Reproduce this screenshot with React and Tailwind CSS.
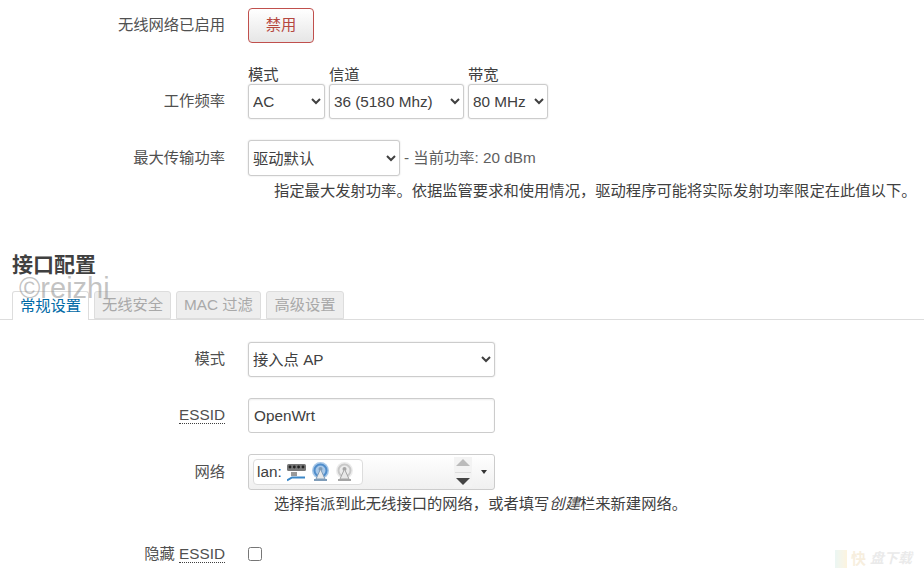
const selectClass =
  'h-full rounded-[3px] border border-[#ccc] bg-white text-[15.3px] text-[#404040] shadow-[0_0_2px_#ddd] outline-none'

const Row = ({ label, dotted, className = '', children }) => (
  <div className={`flex items-center ${className}`}>
    <div className="w-[225px] shrink-0 text-right text-[#505050]">
      {label}
      {dotted && <span className="border-b border-dotted border-[#404040] leading-none">{dotted}</span>}
    </div>
    <div className="ml-[23px] flex items-center">{children}</div>
  </div>
)

const SwitchIcon = () => (
  <svg width="19" height="20" viewBox="0 0 19 20">
    <rect x="0" y="2" width="19" height="7" rx="1.5" fill="#777" />
    <circle cx="3" cy="5" r="1.4" fill="#222" />
    <circle cx="7.3" cy="5" r="1.4" fill="#222" />
    <circle cx="11.6" cy="5" r="1.4" fill="#222" />
    <circle cx="16" cy="5" r="1.4" fill="#222" />
    <rect x="4" y="10" width="6" height="4" fill="#9a9a9a" />
    <path d="M0 18.5 L5 15.5 H18" fill="none" stroke="#3c88c8" strokeWidth="2" />
  </svg>
)

const RadioIcon = ({ ring, inner, base }) => (
  <svg width="19" height="20" viewBox="0 0 19 20">
    <circle cx="9.5" cy="8.5" r="8.5" fill={ring} />
    <circle cx="9.5" cy="8.5" r="6" fill="none" stroke={inner} strokeWidth="2" />
    <circle cx="9.5" cy="7" r="2" fill={base} />
    <path d="M9.5 7 L5 17 H14 Z" fill="#e8e8e8" stroke={base} strokeWidth="1" />
    <rect x="3" y="17" width="13" height="2" fill={base} />
  </svg>
)

const App = () => (
  <div className="relative h-[578px] w-[924px] overflow-hidden bg-white font-['Liberation_Sans','Noto_Sans_CJK_SC',sans-serif] text-[15.3px] text-[#404040]">
    <Row label="无线网络已启用" className="pt-[8px]">
      <button className="h-[35px] w-[66px] rounded-[4px] border border-[#c0504d] bg-gradient-to-b from-white to-[#e6e6e6] text-[#b5473f]">
        禁用
      </button>
    </Row>

    <div className="mt-[22px] flex items-end">
      <div className="flex h-[35px] w-[225px] shrink-0 items-center justify-end text-[#505050]">工作频率</div>
      <div className="ml-[23px] flex gap-[4px]">
        <div className="flex flex-col">
          <span className="h-[19px] leading-[19px]">模式</span>
          <div className="h-[35px]">
            <select className={`${selectClass} w-[77px]`}><option>AC</option></select>
          </div>
        </div>
        <div className="flex flex-col">
          <span className="h-[19px] leading-[19px]">信道</span>
          <div className="h-[35px]">
            <select className={`${selectClass} w-[135px]`}><option>36 (5180 Mhz)</option></select>
          </div>
        </div>
        <div className="flex flex-col">
          <span className="h-[19px] leading-[19px]">带宽</span>
          <div className="h-[35px]">
            <select className={`${selectClass} w-[80px]`}><option>80 MHz</option></select>
          </div>
        </div>
      </div>
    </div>

    <Row label="最大传输功率" className="mt-[21px]">
      <div className="h-[36px]">
        <select className={`${selectClass} w-[152px]`}><option>驱动默认</option></select>
      </div>
      <span className="ml-[4px] text-[#606060]">- 当前功率: 20 dBm</span>
    </Row>
    <p className="ml-[274px] mt-[5px] whitespace-nowrap leading-[19px]">
      指定最大发射功率。依据监管要求和使用情况，驱动程序可能将实际发射功率限定在此值以下。
    </p>

    <h3 className="ml-[12px] mt-[51px] text-[21px] font-bold leading-[28px]">接口配置</h3>

    <div className="mt-[12px] flex h-[29px] items-end gap-[5px] border-b border-[#ddd] pl-[12px]">
      <div className="relative z-10 -mb-px flex h-[29px] w-[77px] items-center justify-center rounded-t-[3px] border border-b-0 border-[#ddd] bg-white text-[#0069a6]">
        常规设置
      </div>
      <div className="flex h-[28px] w-[77px] items-center justify-center rounded-t-[3px] border border-[#ddd] bg-[#eee] text-[#a9a9a9]">
        无线安全
      </div>
      <div className="flex h-[28px] w-[85px] items-center justify-center rounded-t-[3px] border border-[#ddd] bg-[#eee] text-[#a9a9a9]">
        MAC 过滤
      </div>
      <div className="flex h-[28px] w-[78px] items-center justify-center rounded-t-[3px] border border-[#ddd] bg-[#eee] text-[#a9a9a9]">
        高级设置
      </div>
    </div>
    <span className="pointer-events-none absolute left-[19px] top-[270px] z-20 text-[29px] leading-[36px] text-[#888]/50">
      ©reizhi
    </span>

    <Row label="模式" className="mt-[22px]">
      <div className="h-[35px]">
        <select className={`${selectClass} w-[247px]`}><option>接入点 AP</option></select>
      </div>
    </Row>

    <Row dotted="ESSID" className="mt-[21px]">
      <input
        readOnly
        value="OpenWrt"
        className="h-[35px] w-[247px] rounded-[3px] border border-[#ccc] bg-white px-[5px] text-[#404040] shadow-[inset_0_1px_2px_#eee] outline-none"
      />
    </Row>

    <Row label="网络" className="mt-[21px]">
      <div className="relative flex h-[36px] w-[247px] items-center rounded-[3px] border border-[#ccc] bg-gradient-to-b from-white to-[#f0f0f0] pl-[4px]">
        <div className="flex h-[26px] w-[110px] items-center gap-[5px] rounded-[4px] border border-[#ddd] bg-white pl-[3px]">
          lan:
          <SwitchIcon />
          <RadioIcon ring="#a8c8e8" inner="#4f8dcb" base="#7f9cb8" />
          <RadioIcon ring="#ececec" inner="#c8c8c8" base="#a5a5a5" />
        </div>
        <div className="absolute right-[22px] top-[2px] flex h-[30px] w-[18px] flex-col items-center justify-between bg-[#f3f3f3] py-[2px]">
          <span className="h-0 w-0 border-x-[7px] border-b-[7px] border-x-transparent border-b-[#bbb]" />
          <span className="h-px w-[16px] bg-[#ddd]" />
          <span className="h-0 w-0 border-x-[7px] border-t-[7px] border-x-transparent border-t-[#444]" />
        </div>
        <span className="absolute right-[7px] top-[15px] h-0 w-0 border-x-[3px] border-t-[4px] border-x-transparent border-t-[#333]" />
      </div>
    </Row>
    <p className="ml-[274px] mt-[4px] leading-[19px]">
      选择指派到此无线接口的网络，或者填写<em>创建</em>栏来新建网络。
    </p>

    <Row label="隐藏 " dotted="ESSID" className="mt-[30px]">
      <input type="checkbox" readOnly className="h-[14px] w-[14px]" />
    </Row>

    <div className="pointer-events-none absolute bottom-[8px] left-[835px] flex items-center gap-[4px] opacity-20">
      <span className="h-[18px] w-[12px] bg-gradient-to-r from-[#9fd8c8] to-[#f4c860]" />
      <span className="text-[15px] font-bold text-[#d8b060]">快</span>
      <span className="text-[14px] font-bold italic text-[#999]">盘下载</span>
    </div>
  </div>
)

export default App
